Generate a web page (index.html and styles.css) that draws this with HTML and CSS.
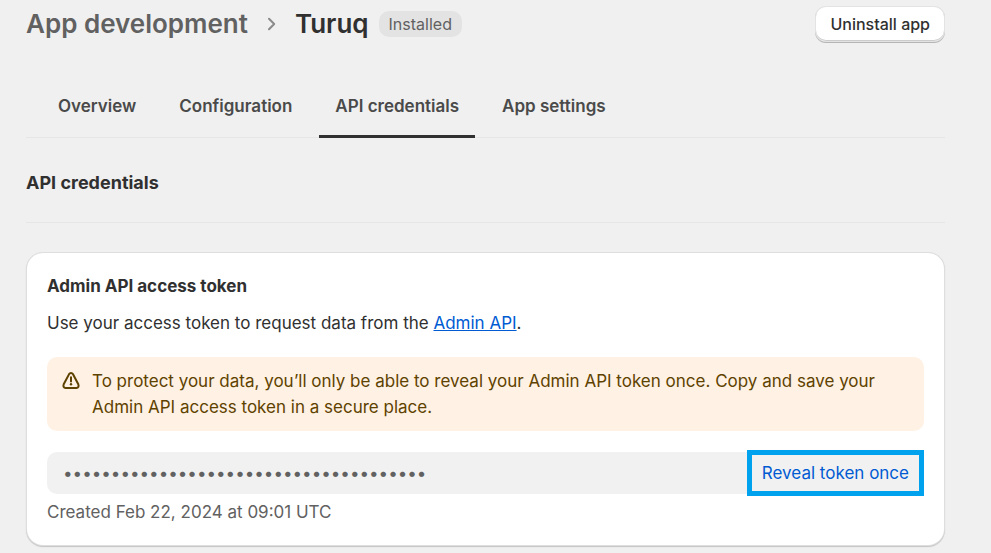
FILE: index.html
```html
<!DOCTYPE html>
<html lang="en">
<head>
<meta charset="utf-8">
<meta name="viewport" content="width=device-width, initial-scale=1">
<title>Turuq - App development</title>
<link rel="stylesheet" href="styles.css">
</head>
<body>
<div class="page">
  <header class="page-header">
    <a class="crumb" href="#apps">App development</a>
    <svg class="chevron" viewBox="0 0 10 14" aria-hidden="true"><path d="M2 1.8 7.2 7 2 12.2"/></svg>
    <h1 class="title">Turuq</h1>
    <span class="badge">Installed</span>
    <button class="uninstall" type="button">Uninstall app</button>
  </header>

  <nav class="tabs">
    <a class="tab" href="#overview">Overview</a>
    <a class="tab" href="#configuration">Configuration</a>
    <a class="tab tab-active" href="#credentials" aria-current="page">API credentials</a>
    <a class="tab" href="#settings">App settings</a>
  </nav>

  <main>
    <h2 class="section-title">API credentials</h2>
    <section class="card">
      <h3 class="card-title">Admin API access token</h3>
      <p class="intro">Use your access token to request data from the <a class="link" href="#admin-api">Admin API</a>.</p>
      <div class="banner">
        <svg class="warning" viewBox="0 0 22 26" aria-hidden="true"><path d="M9.1 6.1 3.7 16.3C2.9 18.2 3.7 19.9 5.5 19.9H16.5C18.3 19.9 19.1 18.2 18.3 16.3L12.9 6.1C12 4.6 10 4.6 9.1 6.1Z"/><path d="M11 9.3V13.4"/><circle cx="11" cy="16.3" r="1.2"/></svg>
        <p class="banner-text">To protect your data, you’ll only be able to reveal your Admin API token once. Copy and save your Admin API access token in a secure place.</p>
      </div>
      <div class="token">
        <span class="token-mask">••••••••••••••••••••••••••••••••••••••</span>
        <button class="reveal" type="button">Reveal token once</button>
      </div>
      <p class="created">Created Feb 22, 2024 at 09:01 UTC</p>
    </section>
  </main>
</div>
</body>
</html>
```
FILE: styles.css
```css
* {
  box-sizing: border-box;
}

body {
  margin: 0;
  background: #f0f0f0;
  color: #303030;
  font: 17px/26px Inter, "Liberation Sans", sans-serif;
}

h1, h2, h3, p {
  margin: 0;
}

button {
  font: inherit;
  border: 0;
  cursor: pointer;
}

.page {
  padding: 6px 46px 8px 26px;
}

.page-header {
  display: flex;
  align-items: center;
  height: 36px;
}

.crumb,
.title {
  font-size: 26px;
  font-weight: 600;
  line-height: 32px;
}

.crumb {
  color: #616161;
  text-decoration: none;
}

.chevron {
  width: 10px;
  height: 14px;
  margin: 0 18px 0 19px;
  fill: none;
  stroke: #8a8a8a;
  stroke-width: 2;
  stroke-linecap: round;
  stroke-linejoin: round;
}

.badge {
  margin-left: 10px;
  padding: 0 10px;
  border-radius: 10px;
  background: #e3e3e3;
  color: #616161;
  font-size: 16px;
}

.uninstall {
  margin-left: auto;
  height: 34px;
  margin-right: 1px;
  padding: 0 14px;
  border-radius: 10px;
  background: #fff;
  color: #303030;
  font-size: 16px;
  font-weight: 500;
  box-shadow: inset 0 -1px #cccccc, 0 0 0 1px #e3e3e3, 0 1px 0 0 #b5b5b5, 0 1px 0 1px #b5b5b5;
}

.tabs {
  display: flex;
  gap: 11px;
  margin-top: 51px;
  padding-left: 16px;
  box-shadow: inset 0 -1px #e6e6e6;
}

.tab {
  padding: 0 16px 16px;
  border-bottom: 3px solid transparent;
  color: #4a4a4a;
  font-weight: 600;
  text-decoration: none;
}

.tab-active {
  border-color: #303030;
  border-radius: 2px 2px 0 0;
}

.section-title {
  padding: 32px 0 26px;
  border-bottom: 1px solid #e6e6e6;
  font-size: 18px;
  font-weight: 650;
}

.card {
  margin: 30px 1px 0;
  padding: 20px;
  border-radius: 16px;
  background: #fff;
  box-shadow: 0 0 0 1px #dedede, 0 1px 1px 1px #c4c4c4;
}

.card-title {
  font-size: 17px;
  font-weight: 650;
}

.intro {
  margin-top: 11px;
}

.link {
  color: #005bd3;
}

.banner {
  display: flex;
  gap: 10px;
  margin-top: 21px;
  padding: 11px 16px 11px 13px;
  border-radius: 10px;
  background: #fff1e3;
  color: #5e4200;
}

.warning {
  flex: none;
  width: 22px;
  height: 26px;
  fill: none;
  stroke: #5e4200;
  stroke-width: 2;
  stroke-linecap: round;
}

.warning circle {
  fill: #5e4200;
  stroke: none;
}

.token {
  display: flex;
  align-items: center;
  justify-content: space-between;
  height: 42px;
  margin-top: 21px;
  padding-left: 16px;
  border-radius: 10px;
  background: #f1f1f1;
}

.token-mask {
  color: #616161;
}

.reveal {
  height: 46px;
  padding: 0 10px;
  border: 5px solid #00a2ed;
  background: #f1f1f1;
  color: #005bd3;
}

.created {
  margin-top: 5px;
  color: #616161;
}
```
